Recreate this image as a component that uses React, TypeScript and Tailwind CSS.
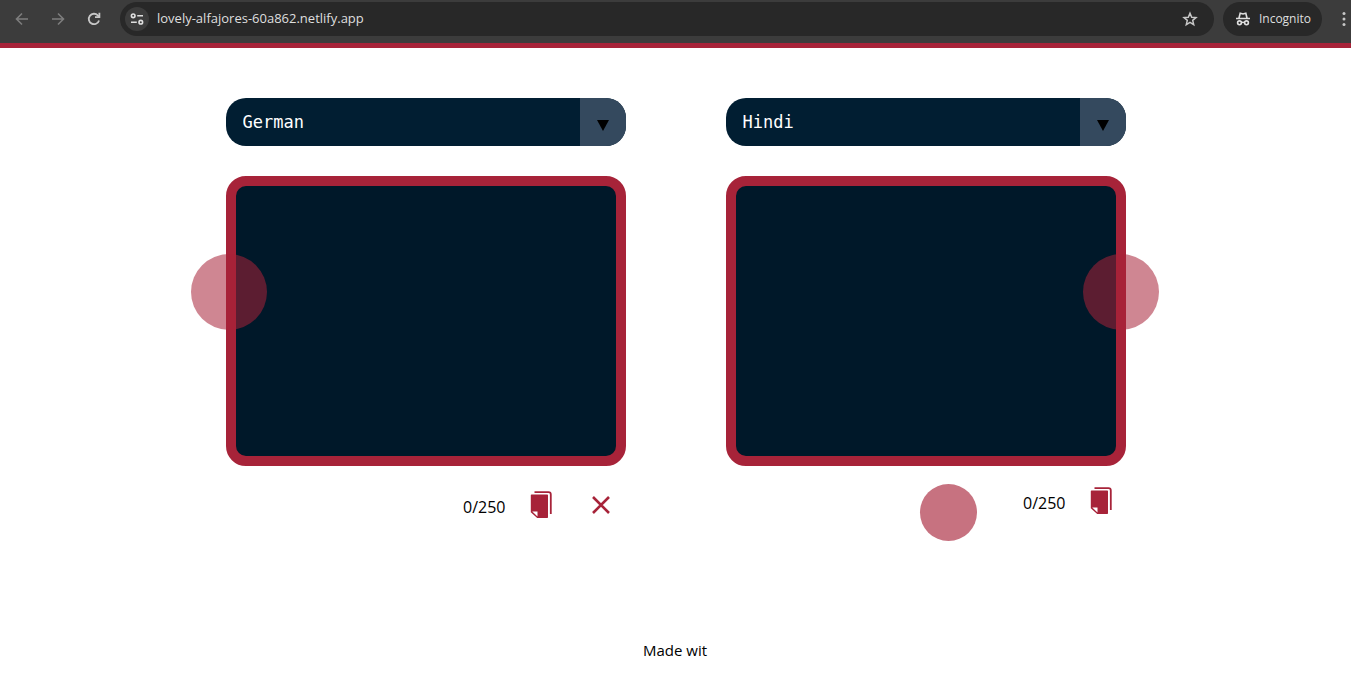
import { useState, type ReactNode } from "react";

const LANGUAGES = ["English", "French", "German", "Hindi", "Italian", "Spanish"];
const LIMIT = 250;

function BackIcon() {
  return (
    <svg width="16" height="16" viewBox="0 0 16 16" fill="none" stroke="currentColor" strokeWidth="1.6" aria-hidden="true">
      <path d="M14 8H3M8 2.5 2.5 8 8 13.5" />
    </svg>
  );
}

function ForwardIcon() {
  return (
    <svg width="16" height="16" viewBox="0 0 16 16" fill="none" stroke="currentColor" strokeWidth="1.6" aria-hidden="true">
      <path d="M2 8h11M8 2.5 13.5 8 8 13.5" />
    </svg>
  );
}

function ReloadIcon() {
  return (
    <svg width="16" height="16" viewBox="0 0 16 16" fill="none" stroke="currentColor" strokeWidth="1.8" aria-hidden="true">
      <path d="M13 9.4A5.2 5.2 0 1 1 11.800 4.400L13.4 6" />
      <path d="M13.4 1.8V6.2H9" />
    </svg>
  );
}

function TuneIcon() {
  return (
    <svg width="16" height="16" viewBox="0 0 16 16" fill="none" stroke="currentColor" strokeWidth="1.6" aria-hidden="true">
      <circle cx="4.2" cy="4.8" r="1.8" />
      <circle cx="11.8" cy="11.2" r="1.8" />
      <path d="M8.2 4.8H14M2 11.2h5.800" />
    </svg>
  );
}

function StarIcon() {
  return (
    <svg width="16" height="16" viewBox="0 0 16 16" fill="none" stroke="currentColor" strokeWidth="1.5" aria-hidden="true">
      <path d="m8 2.200 1.700 4 4.300.4-3.300 2.800 1 4.300L8 11.400l-3.700 2.300 1-4.300L2 6.600l4.300-.4z" />
    </svg>
  );
}

function IncognitoIcon() {
  return (
    <svg width="16" height="16" viewBox="0 0 16 16" fill="none" stroke="currentColor" strokeWidth="1.6" aria-hidden="true">
      <path d="M4 7 5.200 2.300 8 3l2.800-.7L12 7M1 7.500h14" />
      <circle cx="4.500" cy="11.800" r="1.900" />
      <circle cx="11.500" cy="11.800" r="1.900" />
      <path d="M6.400 11.600q1.600-.8 3.200 0" />
    </svg>
  );
}

function CopyIcon() {
  return (
    <svg width="24" height="28" viewBox="0 0 24 28" fill="currentColor" aria-hidden="true">
      <path d="M2.500 3.500h15.800a.7.7 0 0 1 .7.7v22.100a.7.7 0 0 1-.7.7H8.200L1.800 21.200v-17a.7.7 0 0 1 .7-.7z" />
      <path d="M3.200 20.500h5.300v4.900z" fill="white" />
      <path d="M5.500 1.200H19.500a2.300 2.300 0 0 1 2.300 2.300V23" fill="none" stroke="currentColor" strokeWidth="1.800" />
    </svg>
  );
}

function CloseIcon() {
  return (
    <svg width="20" height="20" viewBox="0 0 20 20" fill="none" stroke="currentColor" strokeWidth="2.600" aria-hidden="true">
      <path d="m2 2 16 16M18 2 2 18" />
    </svg>
  );
}

function BrowserBar() {
  return (
    <header className="flex h-12 items-start border-b-[5px] border-[#a72339] bg-[#3c3c3c] font-['Open_Sans','Noto_Sans',sans-serif] text-[#dfdfdf]">
      <div className="flex h-[38px] w-full items-center">
        <nav className="flex w-[120px] shrink-0 items-center gap-5 pl-3.5" aria-label="Browser">
          <button type="button" aria-label="Back" className="text-[#7d7d7d]"><BackIcon /></button>
          <button type="button" aria-label="Forward" className="text-[#7d7d7d]"><ForwardIcon /></button>
          <button type="button" aria-label="Reload" className="text-[#c7c7c7]"><ReloadIcon /></button>
        </nav>
        <div className="flex h-[34px] min-w-0 grow items-center rounded-full bg-[#282828] pr-4 pl-[5px]">
          <button type="button" aria-label="Site settings" className="flex size-6 shrink-0 items-center justify-center rounded-full bg-[#3c3c3c]">
            <TuneIcon />
          </button>
          <input
            aria-label="Address"
            defaultValue="lovely-alfajores-60a862.netlify.app"
            className="ml-2 min-w-0 grow bg-transparent text-[13px] outline-none"
          />
          <button type="button" aria-label="Bookmark" className="text-[#c7c7c7]"><StarIcon /></button>
        </div>
        <div className="ml-[9px] flex h-[34px] shrink-0 items-center gap-2 rounded-full bg-[#282828] pr-[11px] pl-3 text-xs">
          <IncognitoIcon />
          <span>Incognito</span>
        </div>
        <button type="button" aria-label="Menu" className="ml-[18px] w-[11px] shrink-0 overflow-hidden text-[#c7c7c7]">
          <svg width="8" height="16" viewBox="0 0 8 16" fill="currentColor" aria-hidden="true">
            <circle cx="4" cy="2.500" r="1.500" />
            <circle cx="4" cy="8" r="1.500" />
            <circle cx="4" cy="13.500" r="1.500" />
          </svg>
        </button>
      </div>
    </header>
  );
}

function LanguageSelect({ label, initial }: { label: string; initial: string }) {
  return (
    <div className="relative overflow-hidden rounded-[20px]">
      <select
        aria-label={label}
        defaultValue={initial}
        className="block h-12 w-full appearance-none bg-[#011e32] pt-px pr-14 pl-[17px] font-['DejaVu_Sans_Mono',monospace] text-[17px] text-white outline-none"
      >
        {LANGUAGES.map((name) => (
          <option key={name}>{name}</option>
        ))}
      </select>
      <span aria-hidden="true" className="pointer-events-none absolute inset-y-0 right-0 flex w-[46px] items-center justify-center bg-[#34495e] pt-1.5 text-black">
        <svg width="12" height="11" viewBox="0 0 12 11" fill="currentColor">
          <path d="M0 0h12L6 11z" />
        </svg>
      </span>
    </div>
  );
}

function Panel({
  label,
  language,
  circle,
  readOnly = false,
  children,
}: {
  label: string;
  language: string;
  circle: ReactNode;
  readOnly?: boolean;
  children: (count: number, clear: () => void) => ReactNode;
}) {
  const [text, setText] = useState("");
  return (
    <section className="flex min-w-0 flex-col" aria-label={label}>
      <LanguageSelect label={`${label} language`} initial={language} />
      <div className="relative mt-[30px]">
        <textarea
          aria-label={`${label} text`}
          maxLength={LIMIT}
          readOnly={readOnly}
          value={text}
          onChange={(event) => setText(event.target.value)}
          className="block h-[290px] w-full resize-none rounded-[20px] border-10 border-[#a72339] bg-[#001829] p-4 text-white outline-none"
        />
        {circle}
      </div>
      {children(text.length, () => setText(""))}
    </section>
  );
}

export default function App() {
  return (
    <div className="min-h-screen bg-white font-['Open_Sans','Noto_Sans',sans-serif] text-black">
      <BrowserBar />
      <main className="mx-auto mt-[50px] grid max-w-[900px] grid-cols-2 gap-[100px]">
        <Panel
          label="Source"
          language="German"
          circle={<span className="pointer-events-none absolute top-[78px] left-[-35px] size-[76px] rounded-full bg-[#a72339]/55" />}
        >
          {(count, clear) => (
            <div className="mt-6 flex h-[30px] items-center justify-end pr-[15px] text-[#a72339]">
              <span className="pt-1 text-base leading-6 text-black">{count}/{LIMIT}</span>
              <button type="button" aria-label="Copy source text" className="ml-[23px]"><CopyIcon /></button>
              <button type="button" aria-label="Clear text" onClick={clear} className="ml-[38px]"><CloseIcon /></button>
            </div>
          )}
        </Panel>
        <Panel
          label="Translation"
          language="Hindi"
          readOnly
          circle={<span className="pointer-events-none absolute top-[78px] right-[-33px] size-[76px] rounded-full bg-[#a72339]/55" />}
        >
          {(count) => (
            <div className="mt-[18px] flex items-start justify-end pr-[13px] text-[#a72339]">
              <button type="button" aria-label="Translate" className="mr-[46px] size-[57px] rounded-full bg-[#c77280]" />
              <span className="pt-[7px] text-base leading-6 text-black">{count}/{LIMIT}</span>
              <button type="button" aria-label="Copy translation" className="mt-[3px] ml-[23px]"><CopyIcon /></button>
            </div>
          )}
        </Panel>
      </main>
      <footer className="mx-auto mt-[97px] w-[65px] text-[15px] leading-6 whitespace-nowrap">Made wit</footer>
    </div>
  );
}
